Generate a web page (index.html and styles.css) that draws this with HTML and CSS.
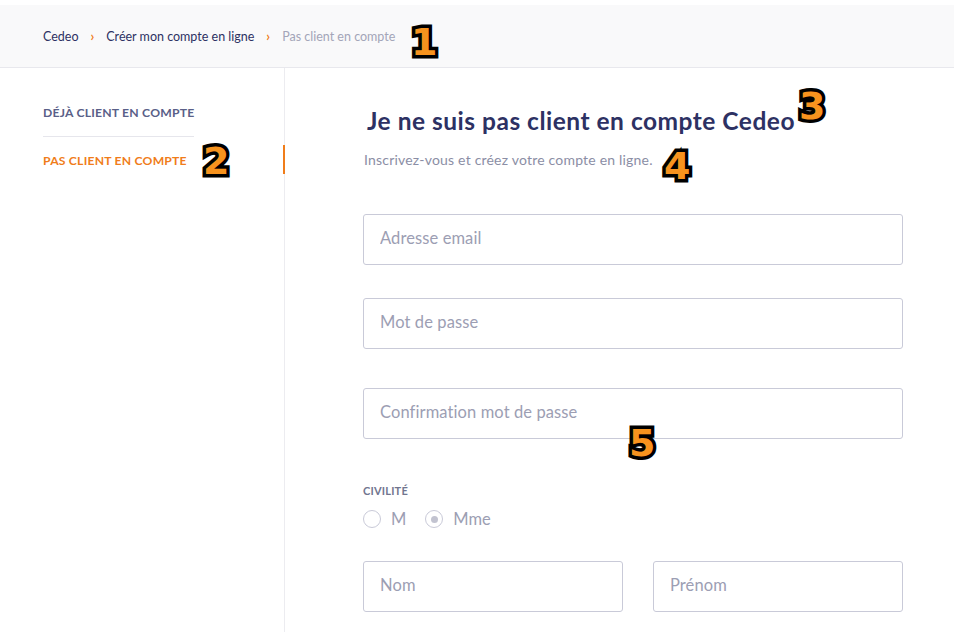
FILE: index.html
```html
<!DOCTYPE html>
<html lang="fr">
<head>
<meta charset="utf-8">
<title>Pas client en compte</title>
<link rel="stylesheet" href="styles.css">
</head>
<body>
<div class="topgap"></div>
<nav class="breadcrumb">
  <a class="crumb">Cedeo</a>
  <span class="sep">›</span>
  <a class="crumb">Créer mon compte en ligne</a>
  <span class="sep">›</span>
  <span class="crumb current">Pas client en compte</span>
</nav>
<div class="layout">
  <aside class="sidebar">
    <a class="side-link">DÉJÀ CLIENT EN COMPTE</a>
    <a class="side-link active">PAS CLIENT EN COMPTE</a>
  </aside>
  <main class="main">
    <h1 class="title">Je ne suis pas client en compte Cedeo</h1>
    <p class="subtitle">Inscrivez-vous et créez votre compte en ligne.</p>
    <form class="form">
      <div class="field f1"><input type="email" placeholder="Adresse email"></div>
      <div class="field f2"><input type="password" placeholder="Mot de passe"></div>
      <div class="field f3"><input type="password" placeholder="Confirmation mot de passe"></div>
      <div class="civ">
        <div class="civ-label">CIVILITÉ</div>
        <div class="radios">
          <label class="radio"><span class="dot"></span>M</label>
          <label class="radio checked"><span class="dot"></span>Mme</label>
        </div>
      </div>
      <div class="row">
        <div class="field"><input type="text" placeholder="Nom"></div>
        <div class="field"><input type="text" placeholder="Prénom"></div>
      </div>
    </form>
  </main>
</div>
<span class="badge b1">1</span>
<span class="badge b2">2</span>
<span class="badge b3">3</span>
<span class="badge b4">4</span>
<span class="badge b5">5</span>
</body>
</html>
```
FILE: styles.css
```css
* { box-sizing: border-box; }
html, body { margin: 0; padding: 0; background: #fff; }
body {
  font-family: Lato, "Open Sans", "Liberation Sans", sans-serif;
  color: #2d3163;
  width: 954px;
  height: 632px;
  overflow: hidden;
  position: relative;
}
.topgap { height: 5px; background: #fff; }
.breadcrumb {
  height: 63px;
  background: #f9f9fa;
  border-bottom: 1px solid #e8e8ed;
  display: flex;
  align-items: center;
  padding-left: 43px;
  font-size: 12.5px;
}
.crumb { color: #2d3163; }
.crumb.current { color: #a3a5b8; }
.sep {
  color: #f07d1a;
  font-weight: 700;
  margin: 0 12px;
  font-size: 13px;
}
.layout { display: flex; height: 564px; }
.sidebar {
  width: 285px;
  border-right: 1px solid #ececf0;
  padding: 34px 0 0 43px;
  display: flex;
  flex-direction: column;
  position: relative;
}
.side-link {
  display: block;
  width: 151px;
  font-size: 12.2px;
  font-weight: 700;
  letter-spacing: 0.2px;
  color: #5a5f88;
  padding: 3px 0 16px;
  border-bottom: 1px solid #e6e6ec;
  white-space: nowrap;
}
.side-link.active {
  color: #f07d1a;
  border-bottom: none;
  padding-top: 16px;
}
.side-link.active::after {
  content: "";
  position: absolute;
  right: -1px;
  top: 77px;
  width: 2px;
  height: 29px;
  background: #f07d1a;
}
.main { flex: 1; padding: 38px 0 0 78px; }
.title {
  margin: 0 0 0 4px;
  font-size: 24.5px;
  font-weight: 700;
  letter-spacing: 0.5px;
  color: #2d3163;
  line-height: 30px;
}
.subtitle {
  margin: 15px 0 0 1px;
  font-size: 14px;
  letter-spacing: 0.2px;
  color: #8b8ea5;
  line-height: 18px;
}
.form { width: 540px; margin-top: 45px; }
.field input {
  display: block;
  width: 100%;
  height: 51px;
  border: 1px solid #c9cad8;
  border-radius: 3px;
  padding: 0 16px 4px;
  font-family: inherit;
  font-size: 16.5px;
  letter-spacing: 0.1px;
  color: #2d3163;
  outline: none;
}
.field input::placeholder { color: #9c9eb3; }
.f2 { margin-top: 33px; }
.f3 { margin-top: 39px; }
.civ { margin-top: 45px; }
.civ-label {
  font-size: 11px;
  font-weight: 700;
  color: #71758f;
  letter-spacing: 0.2px;
}
.radios { display: flex; gap: 19px; margin-top: 12px; }
.radio {
  display: flex;
  align-items: center;
  gap: 10px;
  font-size: 16.5px;
  color: #9c9eb3;
}
.dot {
  width: 18px;
  height: 18px;
  border: 1px solid #c9cad8;
  border-radius: 50%;
  display: flex;
  align-items: center;
  justify-content: center;
}
.radio.checked .dot::after {
  content: "";
  width: 7px;
  height: 7px;
  border-radius: 50%;
  background: #c2c3d0;
}
.row {
  display: grid;
  grid-template-columns: 260px 250px;
  gap: 30px;
  margin-top: 32px;
}
.badge {
  position: absolute;
  font-family: "DejaVu Sans", sans-serif;
  font-weight: 700;
  font-size: 38px;
  line-height: 1;
  color: #f7931e;
  -webkit-text-stroke: 7px #000;
  paint-order: stroke fill;
  text-shadow: 1px 2px 2px rgba(0,0,0,0.35);
}
.b1 { left: 411px; top: 23px; }
.b2 { left: 203px; top: 142px; }
.b3 { left: 799px; top: 87px; }
.b4 { left: 664px; top: 147px; }
.b5 { left: 629px; top: 424px; }
```
